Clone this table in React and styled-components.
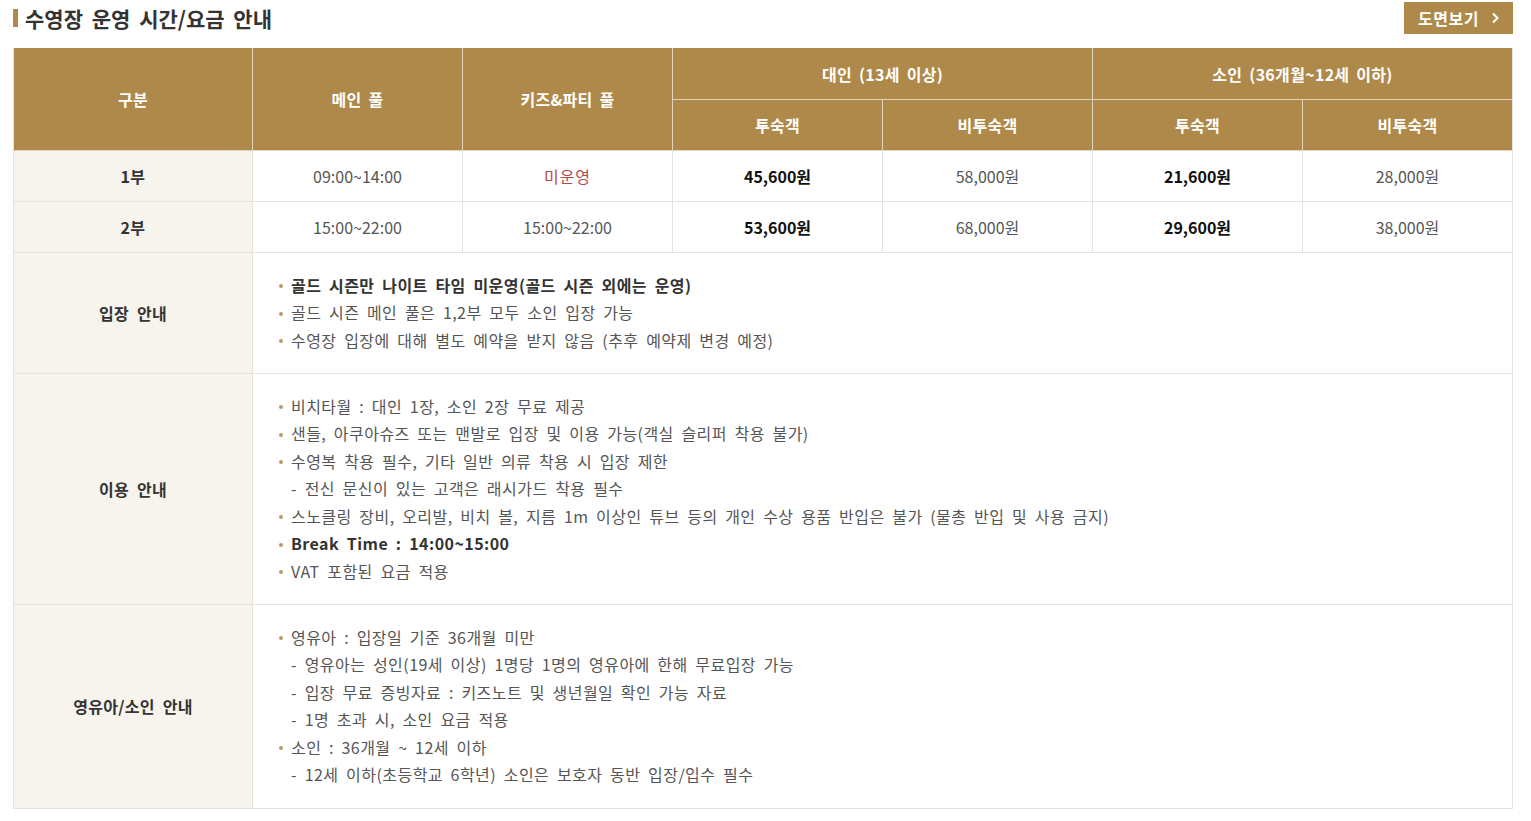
import React from 'react';
import styled, { createGlobalStyle } from 'styled-components';

const GlobalStyle = createGlobalStyle`
  body {
    margin: 0;
    background: #fff;
    font-family: "Noto Sans CJK KR", "Noto Sans", sans-serif;
    color: #555;
  }
`;

const Page = styled.div`
  padding: 0 18px 0 13px;
`;

const TitleBar = styled.div`
  display: flex;
  align-items: center;
  justify-content: space-between;
  height: 34px;
  padding-top: 1px;
  margin-bottom: 13px;
`;

const Title = styled.h2`
  display: flex;
  align-items: center;
  gap: 7px;
  margin: 0;
  font-size: 21px;
  font-weight: 700;
  color: #333;
  word-spacing: 4px;

  &::before {
    content: '';
    width: 5px;
    height: 18px;
    background: #ae8949;
  }
`;

const MapButton = styled.button`
  display: flex;
  align-items: center;
  gap: 12px;
  height: 32px;
  padding: 0 13px 0 14px;
  border: 0;
  background: #ae8949;
  color: #fff;
  font-family: inherit;
  font-size: 16px;
  font-weight: 700;
  letter-spacing: 0.5px;
  cursor: pointer;
`;

const Table = styled.table`
  width: 1500px;
  border-collapse: collapse;
  table-layout: fixed;
  font-size: 16px;
`;

const Th = styled.th`
  height: ${p => (p.$top ? '51px' : '50px')};
  padding: 0;
  background: #ae8949;
  color: #fff;
  font-size: 16px;
  font-weight: 700;
  letter-spacing: 0.3px;
  word-spacing: 3px;
  border: 1px solid #e2d5bd;
  border-top: 0;
  &:first-child { border-left-color: #e6e2dc; }
  &:last-child { border-right-color: #e6e2dc; }
`;

const Td = styled.td`
  height: 50px;
  padding: 0;
  text-align: center;
  border: 1px solid #e6e2dc;
  color: ${p => (p.$red ? '#b34a4a' : p.$strong ? '#111' : '#555')};
  font-weight: ${p => (p.$strong ? 700 : 400)};
  letter-spacing: ${p => (p.$red ? '1px' : '0')};
`;

const Label = styled.th`
  padding: 0;
  background: #f7f4ee;
  color: #333;
  font-size: 16px;
  font-weight: 700;
  letter-spacing: 0.3px;
  word-spacing: 4px;
  border: 1px solid #e6e2dc;
`;

const Info = styled.td`
  padding: 18px 0 19.5px 24px;
  border: 1px solid #e6e2dc;
  text-align: left;
`;

const List = styled.ul`
  margin: 0;
  padding: 0;
  list-style: none;
`;

const Item = styled.li`
  display: flex;
  align-items: center;
  height: 27.5px;
  padding-left: ${p => (p.$sub ? '14px' : '0')};
  color: ${p => (p.$bold ? '#333' : '#555')};
  font-weight: ${p => (p.$bold ? 700 : 400)};
  letter-spacing: 0.45px;
  word-spacing: 3.6px;
  white-space: nowrap;

  &::before {
    content: '';
    display: ${p => (p.$sub ? 'none' : 'block')};
    width: 4px;
    height: 4px;
    margin: 3px 8px 0 2px;
    border-radius: 50%;
    background: #b79a66;
  }
`;

const Chevron = () => (
  <svg width="9" height="12" viewBox="0 0 9 12" fill="none">
    <path d="M2 1.5L6.5 6L2 10.5" stroke="#fff" strokeWidth="2" />
  </svg>
);

const rates = [
  { part: '1부', main: '09:00~14:00', kids: '미운영', a1: '45,600원', a2: '58,000원', c1: '21,600원', c2: '28,000원' },
  { part: '2부', main: '15:00~22:00', kids: '15:00~22:00', a1: '53,600원', a2: '68,000원', c1: '29,600원', c2: '38,000원' },
];

const notes = [
  {
    title: '입장 안내',
    items: [
      { text: '골드 시즌만 나이트 타임 미운영(골드 시즌 외에는 운영)', bold: true },
      { text: '골드 시즌 메인 풀은 1,2부 모두 소인 입장 가능' },
      { text: '수영장 입장에 대해 별도 예약을 받지 않음 (추후 예약제 변경 예정)' },
    ],
  },
  {
    title: '이용 안내',
    items: [
      { text: '비치타월 : 대인 1장, 소인 2장 무료 제공' },
      { text: '샌들, 아쿠아슈즈 또는 맨발로 입장 및 이용 가능(객실 슬리퍼 착용 불가)' },
      { text: '수영복 착용 필수, 기타 일반 의류 착용 시 입장 제한' },
      { text: '- 전신 문신이 있는 고객은 래시가드 착용 필수', sub: true },
      { text: '스노클링 장비, 오리발, 비치 볼, 지름 1m 이상인 튜브 등의 개인 수상 용품 반입은 불가 (물총 반입 및 사용 금지)' },
      { text: 'Break Time : 14:00~15:00', bold: true },
      { text: 'VAT 포함된 요금 적용' },
    ],
  },
  {
    title: '영유아/소인 안내',
    items: [
      { text: '영유아 : 입장일 기준 36개월 미만' },
      { text: '- 영유아는 성인(19세 이상) 1명당 1명의 영유아에 한해 무료입장 가능', sub: true },
      { text: '- 입장 무료 증빙자료 : 키즈노트 및 생년월일 확인 가능 자료', sub: true },
      { text: '- 1명 초과 시, 소인 요금 적용', sub: true },
      { text: '소인 : 36개월 ~ 12세 이하' },
      { text: '- 12세 이하(초등학교 6학년) 소인은 보호자 동반 입장/입수 필수', sub: true },
    ],
  },
];

const App = () => (
  <Page>
    <GlobalStyle />
    <TitleBar>
      <Title>수영장 운영 시간/요금 안내</Title>
      <MapButton>
        도면보기
        <Chevron />
      </MapButton>
    </TitleBar>
    <Table>
      <colgroup>
        <col style={{ width: 239 }} />
        <col span="6" style={{ width: 210 }} />
      </colgroup>
      <thead>
        <tr>
          <Th $top rowSpan="2">구분</Th>
          <Th $top rowSpan="2">메인 풀</Th>
          <Th $top rowSpan="2">키즈&amp;파티 풀</Th>
          <Th $top colSpan="2">대인 (13세 이상)</Th>
          <Th $top colSpan="2">소인 (36개월~12세 이하)</Th>
        </tr>
        <tr>
          <Th>투숙객</Th>
          <Th>비투숙객</Th>
          <Th>투숙객</Th>
          <Th>비투숙객</Th>
        </tr>
      </thead>
      <tbody>
        {rates.map(r => (
          <tr key={r.part}>
            <Label>{r.part}</Label>
            <Td>{r.main}</Td>
            <Td $red={r.kids === '미운영'}>{r.kids}</Td>
            <Td $strong>{r.a1}</Td>
            <Td>{r.a2}</Td>
            <Td $strong>{r.c1}</Td>
            <Td>{r.c2}</Td>
          </tr>
        ))}
        {notes.map(n => (
          <tr key={n.title}>
            <Label>{n.title}</Label>
            <Info colSpan="6">
              <List>
                {n.items.map(i => (
                  <Item key={i.text} $sub={i.sub} $bold={i.bold}>
                    {i.text}
                  </Item>
                ))}
              </List>
            </Info>
          </tr>
        ))}
      </tbody>
    </Table>
  </Page>
);

export default App;
